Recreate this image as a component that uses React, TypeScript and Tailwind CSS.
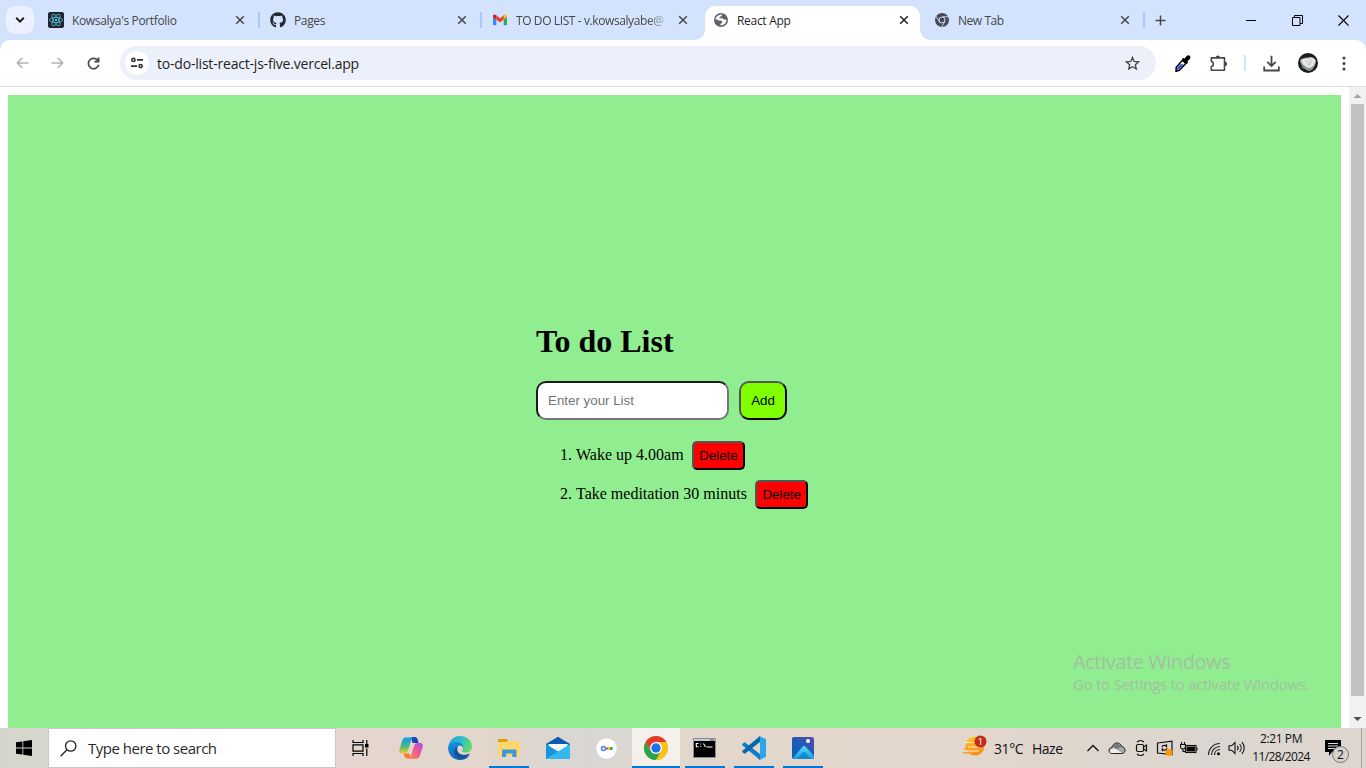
import React from "react";
import { FaGithub } from "react-icons/fa";

const Close = ({ dark = false }: { dark?: boolean }) => (
  <svg width="10" height="10" viewBox="0 0 10 10" className="shrink-0" stroke={dark ? "#1f1f1f" : "#474747"} strokeWidth="1.5">
    <path d="M1.2 1.2 8.8 8.8M8.8 1.2 1.2 8.8" />
  </svg>
);

const ReactIcon = () => (
  <svg width="16" height="16" viewBox="0 0 16 16">
    <rect width="16" height="16" rx="2" fill="#20232a" />
    <g fill="none" stroke="#58c4dc" strokeWidth=".8">
      <ellipse cx="8" cy="8" rx="6.6" ry="2.6" />
      <ellipse cx="8" cy="8" rx="6.6" ry="2.6" transform="rotate(60 8 8)" />
      <ellipse cx="8" cy="8" rx="6.6" ry="2.6" transform="rotate(120 8 8)" />
    </g>
    <circle cx="8" cy="8" r="1.3" fill="#58c4dc" />
  </svg>
);

const Gmail = () => (
  <svg width="16" height="16" viewBox="0 0 16 16">
    <path d="M1 5v7.4c0 .5.4.8.9.8h2.4V7.1z" fill="#4285f4" />
    <path d="M11.7 7.1v6.1h2.4c.5 0 .9-.3.9-.8V5z" fill="#34a853" />
    <path d="M11.7 3.6v4L15 5.2V4.1c0-1.4-1.500-2-2.500-1.200z" fill="#fbbc04" />
    <path d="M4.300 7.600V3.300L8 6.200l3.700-2.900v4.300L8 10.400z" fill="#ea4335" />
    <path d="M1 4.100v1.100l3.300 2.400v-4l-.8-.7C2.500 2.100 1 2.700 1 4.100z" fill="#c5221f" />
  </svg>
);

const Globe = () => (
  <svg width="14" height="14" viewBox="0 0 14 14">
    <circle cx="7" cy="7" r="7" fill="#5f6368" />
    <path d="M8.200 1.500 7.600 3.200 5.700 3.700 5.300 5.300h3.300l1.300 1.300 2.600.2c-.1 2.200-1.500 4.400-3.800 5.300L6.400 12.500l.2-1.700 1.700-1V8.400L6.900 7.500H4.600L3 6.300l-1.500.4C1.500 4.200 3.900 1.500 8.200 1.500z" fill="#fff" />
    <path d="M9 2.100 8.600 3.900l1.600 1.500 2-.3C11.700 3.600 10.500 2.500 9 2.100zM1.500 7.300l1.900 1.500 1 3.100C2.600 11 1.600 9.300 1.500 7.300z" fill="#5f6368" />
  </svg>
);

const Chrome = ({ gray = false, size = 24 }: { gray?: boolean; size?: number }) => (
  <svg width={size} height={size} viewBox="0 0 48 48">
    <circle cx="24" cy="24" r="24" fill={gray ? "#474b50" : "#fbc116"} />
    {!gray && (
      <>
        <path d="M3.200 12A24 24 0 0 1 44.800 12H24L14 30z" fill="#e33b2e" />
        <path d="M3.200 12A24 24 0 0 0 24 48l10.400-18H13.600z" fill="#2ba24c" />
        <path d="M44.800 12A24 24 0 0 1 24 48l10.400-18L24 12z" fill="#fbc116" />
      </>
    )}
    {gray && (
      <path d="M24 13h22M14.500 29.500 3.500 10.500M33.500 29.500 22.500 48.500" stroke="#d3e3fd" strokeWidth="3" />
    )}
    <circle cx="24" cy="24" r={gray ? 11.500 : 12} fill={gray ? "#d3e3fd" : "#fff"} />
    <circle cx="24" cy="24" r={gray ? 8.500 : 9.400} fill={gray ? "#474b50" : "#1a73e8"} />
  </svg>
);

type TabProps = {
  icon: React.ReactNode;
  title: string;
  box: string;
  text: string;
  close: string;
  sep?: boolean;
};

const Tab = ({ icon, title, box, text, close, sep = true }: TabProps) => (
  <div className={"flex h-10 shrink-0 items-center " + box}>
    <span className="flex w-4 shrink-0 justify-center">{icon}</span>
    <span className={"whitespace-nowrap pt-[2px] text-[12px] leading-4 text-[#474747] " + text}>{title}</span>
    <span className={"ml-auto flex " + close}>
      <Close />
    </span>
    <span className={sep ? "h-4 w-[2px] bg-[#a8c7fa]" : "h-4 w-[2px]"} />
  </div>
);

const TabStrip = () => (
  <div className="flex h-10 shrink-0 bg-[#d3e3fd]">
    <div className="ml-[6px] mr-1 mt-[6px] flex h-7 w-7 shrink-0 items-center justify-center rounded-[9px] bg-[#ebf1fe]">
      <svg width="10" height="6" viewBox="0 0 10 6" fill="none" stroke="#1f1f1f" strokeWidth="2">
        <path d="m1.200.8 3.800 3.800L8.800.8" />
      </svg>
    </div>
    <Tab icon={<ReactIcon />} title="Kowsalya's Portfolio" box="w-[222px] pl-[10px]" text="ml-2 tracking-[-0.35px]" close="mr-[13px]" />
    <Tab icon={<FaGithub size={16} color="#24292f" />} title="Pages" box="w-[222px] pl-[10px]" text="ml-2 tracking-[-0.35px]" close="mr-[13px]" />
    <Tab
      icon={<Gmail />}
      title="TO DO LIST - v.kowsalyabe@"
      box="w-[221px] pl-[10px]"
      text="ml-2 tracking-[-0.4px] [mask-image:linear-gradient(to_right,black_132px,transparent_154px)]"
      close="mr-[13px]"
      sep={false}
    />
    <div className="w-[222px] shrink-0 pl-[2px] pt-[6px]">
      <div className="relative flex h-[34px] w-[215px] items-center rounded-t-[10px] bg-white pb-[6px] pl-[9px]">
        <span className="absolute -left-[10px] bottom-0 h-[10px] w-[10px] bg-[radial-gradient(circle_at_0_0,transparent_9.500px,white_10px)]" />
        <span className="absolute -right-[10px] bottom-0 h-[10px] w-[10px] bg-[radial-gradient(circle_at_100%_0,transparent_9.500px,white_10px)]" />
        <Globe />
        <span className="ml-[9px] pt-[2px] text-[12px] leading-4 tracking-[-0.3px] text-[#1f1f1f]">React App</span>
        <span className="ml-auto mr-[11px]">
          <Close dark />
        </span>
      </div>
    </div>
    <Tab icon={<Chrome gray size={14} />} title="New Tab" box="w-[220px] pl-[9px]" text="ml-2 tracking-[-0.45px]" close="mr-[13px]" />
    <div className="flex flex-1 items-center pl-[10px]">
      <svg width="11" height="11" viewBox="0 0 11 11" stroke="#474747" strokeWidth="1.500">
        <path d="M5.500.5v10M.5 5.500h10" />
      </svg>
      <svg className="ml-20" width="10" height="10" viewBox="0 0 10 10" stroke="#000">
        <path d="M0 5.500h10" />
      </svg>
      <svg className="ml-9" width="11" height="11" viewBox="0 0 11 11" fill="none" stroke="#000">
        <path d="M.5 2.500h7.500v8H.5zM2.500 2.500v-2h8v8h-2.500" />
      </svg>
      <svg className="ml-[35px]" width="11" height="11" viewBox="0 0 11 11" stroke="#000" strokeWidth="1.100">
        <path d="m.5.5 10 10M10.500.5l-10 10" />
      </svg>
    </div>
  </div>
);

const Toolbar = () => (
  <div className="h-[47px] shrink-0 bg-[#d3e3fd]">
    <div className="flex h-full items-center rounded-t-[10px] border-b border-[#dfe1e5] bg-white">
      <svg className="ml-4" width="13" height="12" viewBox="0 0 13 12" fill="none" stroke="#b0b0b0" strokeWidth="1.500">
        <path d="M12.500 6H1.500M6.300 1 1.300 6l5 5" />
      </svg>
      <svg className="ml-[22px]" width="13" height="12" viewBox="0 0 13 12" fill="none" stroke="#b0b0b0" strokeWidth="1.500">
        <path d="M.5 6h11M6.700 1l5 5-5 5" />
      </svg>
      <svg className="ml-[23px]" width="13" height="13" viewBox="0 0 13 13" fill="none" stroke="#474747" strokeWidth="1.700">
        <path d="M11 3.700A5.200 5.200 0 1 0 11.700 7.700M11.600.5v4.200H7.400" />
      </svg>
      <div className="ml-[20px] flex h-[34px] w-[1036px] items-center rounded-full bg-[#ecf0fa] pl-[5px]">
        <div className="flex h-6 w-6 items-center justify-center rounded-full bg-white">
          <svg width="12" height="12" viewBox="0 0 12 12" fill="none" stroke="#303030" strokeWidth="1.600">
            <circle cx="2.400" cy="2.900" r="1.600" />
            <circle cx="9.600" cy="9.100" r="1.600" />
            <path d="M6 2.900h6M0 9.100h6" />
          </svg>
        </div>
        <span className="ml-2 whitespace-nowrap pt-px text-[14px] leading-5 tracking-[-0.2px] text-[#1f1f1f]">to-do-list-react-js-five.vercel.app</span>
        <svg className="ml-auto mr-[16px]" width="15" height="15" viewBox="0 0 15 15" fill="none" stroke="#474747" strokeWidth="1.300">
          <path d="m7.500 1.400 1.700 4 4.400.4-3.300 2.900 1 4.300-3.800-2.300L3.700 13l1-4.300-3.300-2.900 4.400-.4z" />
        </svg>
      </div>
      <svg className="ml-[19px]" width="16" height="17" viewBox="0 0 16 17">
        <path d="m1.200 12.300 6.300-7 3.300 3.200-6.500 6.900-3.300.9z" fill="#fff" stroke="#000" strokeWidth="1.500" />
        <path d="m2.200 13 3.300-3.700h3.300l-4.800 5-2 .6z" fill="#2446c8" />
        <path d="m6.700 4.300 1.500-1.500 1 .9L11.700.9c1-1 2.300-1 3.200 0 .8.900.8 2.100-.1 3L12.300 6.600l.9.900-1.600 1.600z" fill="#000" />
      </svg>
      <svg className="ml-[19px]" width="17" height="17" viewBox="0 0 17 17">
        <path d="M1.300 2.900h13.200v12.300H1.300v-3.600C4 11.500 4 6.700 1.300 6.500z" fill="none" stroke="#474747" strokeWidth="1.600" strokeLinejoin="round" />
        <path d="M5.800 2.500a2.100 2.100 0 0 1 4.200 0zM15 6.800a2.100 2.100 0 0 1 0 4.200z" fill="#474747" />
      </svg>
      <span className="ml-[17px] h-4 w-[2px] bg-[#d3e3fd]" />
      <svg className="ml-[17px]" width="17" height="17" viewBox="0 0 17 17" fill="none" stroke="#474747" strokeWidth="1.800">
        <path d="M8.500.8v9.700M4.300 6.800l4.200 4.200 4.200-4.200M1.200 11.500v4h14.600v-4" />
      </svg>
      <svg className="ml-[18px]" width="20" height="20" viewBox="0 0 20 20">
        <circle cx="10" cy="10" r="10" fill="#171d1b" />
        <path d="M2 7c2-2 5-2.500 8-2.500 3-1 6 0 8 3-.2 5-2.500 9-6 10.500C7 18 2 12 2 7z" fill="#8f9590" />
        <path d="M3 7c3-2 6-1 9-2.500 3-.5 5 1 5.500 3.500C17 12 14 15 11 15 7 14 4 11 3 7z" fill="#e6e3e3" />
        <path d="M8 8c2 .5 3 2 3 4.500M12 6c1 2 1 4-.5 6" stroke="#b6b4b2" strokeWidth=".8" fill="none" />
        <path d="M3 14l3 2" stroke="#58634f" fill="none" />
      </svg>
      <svg className="ml-[24px]" width="4" height="15" viewBox="0 0 4 15" fill="#474747">
        <circle cx="2" cy="2" r="1.600" />
        <circle cx="2" cy="7.500" r="1.600" />
        <circle cx="2" cy="13" r="1.600" />
      </svg>
    </div>
  </div>
);

const DeleteButton = () => (
  <button className="h-[29px] w-[52.500px] rounded-[5px] border-2 border-b-black border-l-[#555] border-r-black border-t-[#555] bg-[#ff0000] text-center font-['Liberation_Sans',Arial,sans-serif] text-[13.333px] leading-[15px] text-black">
    Delete
  </button>
);

const Item = ({ marker, children }: { marker: string; children: React.ReactNode }) => (
  <li className="flex h-[29px] items-center pl-6">
    <span className="w-4 pb-[2px]">{marker}</span>
    <span className="mr-[8.600px] pb-[2px]">{children}</span>
    <DeleteButton />
  </li>
);

const Page = () => (
  <div className="flex min-h-0 flex-1 bg-white">
    <main className="ml-2 mt-2 w-[1333px] bg-[#90ee90] pl-[528px] pt-[228px] font-['Liberation_Serif','Times_New_Roman',serif] text-black">
      <h1 className="text-[32px] font-bold leading-[36px]">To do List</h1>
      <div className="mt-[22px] flex gap-[10px]">
        <input
          placeholder="Enter your List"
          className="h-[39px] w-[193px] rounded-[10px] border-2 border-b-[#767676] border-l-[#1c1c1c] border-r-[#767676] border-t-[#1c1c1c] bg-white px-[10px] font-['Liberation_Sans',Arial,sans-serif] text-[13.333px] placeholder:text-[#757575]"
        />
        <button className="h-[39px] w-12 rounded-[10px] border-2 border-b-black border-l-[#555] border-r-black border-t-[#555] bg-[#7fff00] font-['Liberation_Sans',Arial,sans-serif] text-[13.333px]">
          Add
        </button>
      </div>
      <ol className="mt-[21px] flex list-none flex-col gap-[10px] text-[16px] leading-[27px]">
        <Item marker="1.">Wake up 4.00am</Item>
        <Item marker="2.">Take meditation 30 minuts</Item>
      </ol>
    </main>
    <div className="ml-2 flex w-[17px] flex-col items-center bg-[#f1f1f1]">
      <svg width="17" height="17" viewBox="0 0 17 17">
        <path d="M4.500 11h8l-4-4z" fill="#a3a3a3" />
      </svg>
      <div className="h-[592px] w-[13px] bg-[#c1c1c1]" />
      <svg className="mt-[14px]" width="17" height="17" viewBox="0 0 17 17">
        <path d="M4.500 7h8l-4 4z" fill="#505050" />
      </svg>
    </div>
  </div>
);

const AppCell = ({ children, open = false, active = false }: { children: React.ReactNode; open?: boolean; active?: boolean }) => (
  <div className={"flex h-10 w-12 shrink-0 flex-col items-center " + (active ? "bg-[#f4f0ec]" : "")}>
    <div className="flex h-[38px] items-center pt-[2px]">{children}</div>
    {open && <div className={"h-[2px] bg-[#0078d7] " + (active ? "w-12" : "w-10")} />}
  </div>
);

const Copilot = () => (
  <svg width="24" height="24" viewBox="0 0 24 24">
    <defs>
      <linearGradient id="cpA" x1="0" y1="0" x2="0" y2="1">
        <stop offset="0" stopColor="#1598ed" />
        <stop offset=".5" stopColor="#3cb887" />
        <stop offset="1" stopColor="#f5c82c" />
      </linearGradient>
      <linearGradient id="cpB" x1="1" y1="0" x2="0" y2="1">
        <stop offset="0" stopColor="#a551ea" />
        <stop offset=".5" stopColor="#ee5b90" />
        <stop offset="1" stopColor="#ff8c42" />
      </linearGradient>
    </defs>
    <path d="M12 1h4c1.500 0 2.200 1 2.700 2.500L19.600 7h-6z" fill="#1647ba" />
    <path d="M6.800 1.500h7.500c-1.500 1-2 2.600-2.500 4.200L9 14.500c-.6 2-1.700 3-3.600 3H3.300c-2.500 0-3.600-1.700-2.900-4L3.300 4.200C3.900 2.500 5 1.500 6.800 1.500z" fill="url(#cpA)" />
    <path d="M4.500 17.500h6L12 22.500H8.300c-1.500 0-2.300-1-2.700-2.500z" fill="#f07c3e" />
    <path d="M18.500 7h2.300c2.500 0 3.600 1.700 2.900 4L20.800 20c-.6 1.600-1.700 2.700-3.600 2.700H9.800c1.500-1 2-2.600 2.500-4.200L15 10c.6-2 1.600-3 3.500-3z" fill="url(#cpB)" />
  </svg>
);

const Edge = () => (
  <svg width="24" height="24" viewBox="0 0 24 24">
    <defs>
      <linearGradient id="edA" x1="0" y1=".2" x2="1" y2=".5">
        <stop offset="0" stopColor="#1c9fe0" />
        <stop offset=".55" stopColor="#2ec2c9" />
        <stop offset="1" stopColor="#66da61" />
      </linearGradient>
      <linearGradient id="edB" x1="0" y1="0" x2=".5" y2="1">
        <stop offset="0" stopColor="#1793dd" />
        <stop offset="1" stopColor="#0c62b6" />
      </linearGradient>
    </defs>
    <path d="M.2 11C1 4.500 6 0 12 0c7 0 12 5 12 10.500 0 4-3 6-6 6-3.500 0-4.200-1.200-3.700-2.200 1.500-2 .3-5.800-4.800-5.800C5 8 1.500 9 .2 11z" fill="url(#edA)" />
    <path d="M.2 11C1.500 7.500 5 6 8.800 6c4 0 6.500 3 6.400 6-.3-2-2.500-3-4.700-2.200-3.500 1.500-4.500 8 1.500 10.700 3 1.500 6.500 1 10-1.500C20 22 16 24 12 24 5 24-.5 18 .2 11z" fill="url(#edB)" />
    <path d="M10.500 9.800C6.500 11 4.300 17 8.500 20.800c3.500 3 9.500 2.200 13.200-2.500.3-.5 0-.8-.5-.5-6 2.700-12-.2-12-4.300 0-1.600.5-2.800 1.300-3.700z" fill="#12549b" />
  </svg>
);

const Explorer = () => (
  <svg width="22" height="20" viewBox="0 0 22 20">
    <path d="M0 2c0-.7.4-1 1-1h7.500l1.500 2h11.200c.5 0 .8.300.8.800V17c0 .6-.3 1-1 1H1c-.7 0-1-.3-1-1z" fill="#ffd76d" />
    <path d="M0 2c0-.7.4-1 1-1h7.500l1.500 1-1.500 2H0z" fill="#dfa005" />
    <path d="M4 19v-6.500c0-.6.400-1 1-1h12.500c.6 0 1 .4 1 1V19h-4.200v-3.500H8.200V19z" fill="#3a99dc" />
  </svg>
);

const Mail = () => (
  <svg width="24" height="24" viewBox="0 0 24 24">
    <path d="M0 8 12 .8 24 8v3H0z" fill="#0a5aae" />
    <path d="M2.500 8h19v8h-19z" fill="#fff" />
    <path d="M0 8v15h24L12 15.500z" fill="#1593dc" />
    <path d="M24 8v15H0z" fill="#32b9ee" />
    <path d="M2.300 8h19.400L12 15z" fill="#f4f5f6" />
  </svg>
);

const Terminal = () => (
  <svg className="mr-px" width="23" height="20" viewBox="0 0 23 20">
    <rect x=".5" y=".5" width="22" height="19" fill="#000" stroke="#8a8f95" />
    <path d="M1 1h21v2H1z" fill="#c3cbd5" />
    <path d="M17 2h4" stroke="#47505c" />
    <path d="M5.500 5.500H3.300v3.200h2.200M10.500 5.500l2 3.500" fill="none" stroke="#fff" strokeWidth="1.100" />
    <path d="M7.300 5.600h1v1h-1zM7.300 8h1v1h-1zM13.500 8.500h6v1h-6z" fill="#fff" />
  </svg>
);

const VSCode = () => (
  <svg width="24" height="24" viewBox="0 0 24 24">
    <path d="m.4 8 1.600-1.400c.4-.3.800-.3 1.200 0L18 18v6L.4 9.200c-.4-.4-.4-.8 0-1.200z" fill="#0f7dc7" />
    <path d="M.4 16 2 17.400c.4.3.8.3 1.200 0L18 6V0L.4 14.800c-.4.4-.4.800 0 1.200z" fill="#0669ad" />
    <path d="M17.300 24c-.6 0-1-.2-1.500-.7.800.7 2.200.2 2.200-1V1.700c0-1.200-1.400-1.700-2.200-1 .5-.5 1.200-.8 2-.4l5 2.300c.8.400 1.200.8 1.200 1.800v15.200c0 1-.4 1.400-1.200 1.800l-4.500 2.300z" fill="#2ba6ed" />
  </svg>
);

const Photos = () => (
  <svg width="22" height="22" viewBox="0 0 22 22">
    <defs>
      <linearGradient id="phA" x1="0" y1="1" x2="1" y2="0">
        <stop offset="0" stopColor="#0b5fbd" />
        <stop offset=".5" stopColor="#1b5bb8" />
        <stop offset="1" stopColor="#5d4bab" />
      </linearGradient>
      <linearGradient id="phB" x1="0" y1="0" x2="0" y2="1">
        <stop offset="0" stopColor="#55dcf8" />
        <stop offset="1" stopColor="#159ce2" />
      </linearGradient>
    </defs>
    <rect width="22" height="22" rx="2" fill="url(#phA)" />
    <path d="m1 21 9.800-11.500c.8-1 1.800-1 2.600 0L22 19v1.500c0 1-.6 1.500-1.500 1.500H2z" fill="url(#phB)" />
    <path d="m5 22 6-6.500c.7-.7 1.500-.7 2.200 0L19 22z" fill="#1288cf" />
    <circle cx="16" cy="4" r="2" fill="#fff" />
  </svg>
);

const Tray = () => (
  <>
    <svg className="ml-[136px] mt-[-5px] shrink-0" width="24" height="22" viewBox="0 0 24 22">
      <defs>
        <linearGradient id="hz" x1="0" y1="0" x2="0" y2="1">
          <stop offset="0" stopColor="#ffc928" />
          <stop offset="1" stopColor="#f28a1c" />
        </linearGradient>
      </defs>
      <circle cx="12" cy="11" r="9.500" fill="url(#hz)" />
      <path d="M2 7.500h9M5 12h12M3 16h13" stroke="#fff0c0" strokeWidth="1.200" />
      <path d="M0 17.800h11M1 14h11" stroke="#f6a32a" strokeWidth="1.400" />
      <circle cx="17.500" cy="6.500" r="6" fill="#c42b1c" />
      <text x="17.500" y="10" fill="#fff" fontSize="9.500" textAnchor="middle" fontFamily="Open Sans, sans-serif">1</text>
    </svg>
    <span className="ml-[7px] w-[38px] shrink-0 whitespace-nowrap text-[14px] tracking-[-0.4px]">31°C</span>
    <span className="w-[54px] shrink-0 text-[14px] tracking-[-0.5px]">Haze</span>
    <svg className="shrink-0" width="14" height="8" viewBox="0 0 14 8" fill="none" stroke="#111" strokeWidth="1.300">
      <path d="m1.500 7 5.500-5.500L12.500 7" />
    </svg>
    <svg className="ml-2 shrink-0" width="18" height="13" viewBox="0 0 18 13">
      <path d="M4.500 11.500C2.200 11.500 1 10.200 1 8.400c0-1.700 1.200-2.900 3-3C4.800 2.800 6.500 1 9 1c2.300 0 4 1.400 4.600 3.600 2 .1 3.400 1.600 3.400 3.500 0 2-1.300 3.400-3.300 3.400z" fill="#aaa" stroke="#222" />
      <path d="M2 9.500c0-2 3-4 5.500-2.500L14 11H4.500C3 11 2 10.500 2 9.500z" fill="#eee" />
      <path d="M5 5C6 1.500 11 .5 13 5L9.500 7z" fill="#777" />
    </svg>
    <svg className="ml-[9px] shrink-0" width="13" height="18" viewBox="0 0 13 18" fill="none" stroke="#111" strokeWidth="1.200">
      <path d="M2 3c2-2 5-2 7 0M2 15c2 2 5 2 7 0M8.500 8l3-2v6l-3-2" />
      <rect x="1.500" y="5.500" width="7" height="7" rx="1.500" />
    </svg>
    <svg className="ml-2 shrink-0" width="18" height="16" viewBox="0 0 18 16" fill="none" stroke="#111" strokeWidth="1.200">
      <path d="M1.500 3 16 1.200v13.300L1.500 13z" />
      <path d="M6 7c.8-2 3.500-2 4.500-.5V4.300M11 8.500c-1 2-3.500 2.200-4.700.6v2.200" />
      <circle cx="13" cy="12.500" r="3.500" fill="#ff9800" stroke="none" />
    </svg>
    <svg className="ml-[6px] shrink-0" width="18" height="14" viewBox="0 0 18 14" fill="none" stroke="#111" strokeWidth="1.100">
      <path d="M1.500 1v3M4.500 1v3M.5 3.500h5v2c0 2-1 2.500-2.500 2.500S.5 7.500.5 5.500zM3 8v2.500h2" fill="none" />
      <rect x="5.500" y="4.500" width="10.500" height="7" />
      <path d="M7 6h7.500v4H7z" fill="#000" />
      <path d="M17 6.500v3" />
    </svg>
    <svg className="ml-[9px] mt-[2px] shrink-0" width="15" height="14" viewBox="0 0 15 14" fill="none" stroke="#222" strokeWidth="1.200">
      <path d="M1.500 13C1.500 6.500 6.500 1.500 13 1.500M4.500 13C4.500 8.200 8.200 4.500 13 4.500M7.500 13c0-3.200 2.300-5.500 5.500-5.500" />
      <circle cx="11.500" cy="11.800" r="1.500" fill="#000" stroke="none" />
    </svg>
    <svg className="ml-[6px] shrink-0" width="18" height="14" viewBox="0 0 18 14" fill="none" stroke="#111" strokeWidth="1.100">
      <path d="M1 4.800h2.500L7 1.500v11L3.500 9.200H1zM9.300 4.800c1 1.300 1 3.100 0 4.400M11.600 3c2 2.300 2 5.700 0 8M14 1.200c2.900 3.400 2.900 8.200 0 11.600" />
    </svg>
    <div className="ml-[3px] flex h-10 w-[64px] shrink-0 flex-col items-center justify-center whitespace-nowrap text-[12px] leading-[18px]">
      <span className="tracking-[-0.4px]">2:21 PM</span>
      <span className="tracking-[-0.6px]">11/28/2024</span>
    </div>
    <div className="relative ml-3 h-10 w-[18px] shrink-0">
      <svg className="mt-[11px]" width="17" height="18" viewBox="0 0 17 18">
        <path d="M0 1h16v12H7l-3 4v-4H0z" fill="#000" />
        <path d="M3 4.500h10M3 7h10M3 9.500h7" stroke="#ddd" strokeWidth="1.100" />
      </svg>
      <span className="absolute left-[7px] top-[18px] flex h-[17px] w-[17px] items-center justify-center rounded-full border border-[#777] bg-[#d5d1cd] text-[12px] leading-none">2</span>
    </div>
    <span className="ml-auto mr-1 h-10 w-px bg-[#aaa5a0]" />
  </>
);

const Taskbar = () => (
  <footer className="flex h-10 shrink-0 items-center bg-[linear-gradient(90deg,#d4d6cc_0%,#d8d6ce_4%,#e4d5cf_26%,#e2d6cb_36%,#d8d6d4_43%,#e3d7cb_52%,#e2d6cd_72%,#dbd6cf_88%,#dcd6ce_100%)] text-[#111]">
    <div className="flex w-12 shrink-0 justify-center">
      <svg width="16" height="16" viewBox="0 0 16 16">
        <path d="M0 2.300 6.500 1.400v6.200H0zM7.300 1.300 16 0v7.600H7.300zM0 8.400h6.500v6.200L0 13.700zM7.300 8.400H16V16l-8.700-1.300z" />
      </svg>
    </div>
    <div className="flex h-10 w-[288px] shrink-0 items-center border border-[#c8c8c8] bg-white pl-[11px]">
      <svg width="17" height="17" viewBox="0 0 17 17" fill="none" stroke="#222" strokeWidth="1.300">
        <circle cx="10.700" cy="6" r="5.200" />
        <path d="M7 9.700.6 16.300" />
      </svg>
      <span className="ml-[11px] whitespace-nowrap text-[15px] tracking-[-0.5px] text-[#2b2b2b]">Type here to search</span>
    </div>
    <div className="mr-[3px] flex w-12 shrink-0 justify-center">
      <svg width="17" height="16" viewBox="0 0 17 16" fill="none" stroke="#000" strokeWidth="1.200">
        <path d="M1 0v2.500h10V0M1 16v-2.500h10V16M1 4.800h10v6.400H1zM14.800 0v4M14.800 8.500V16" />
        <path d="M13 4h3.500v3.500H13z" fill="#000" stroke="none" />
      </svg>
    </div>
    <div className="flex shrink-0 gap-px">
      <AppCell><Copilot /></AppCell>
      <AppCell><Edge /></AppCell>
      <AppCell open><Explorer /></AppCell>
      <AppCell><Mail /></AppCell>
      <AppCell>
        <svg className="mr-px" width="21" height="21" viewBox="0 0 21 21">
          <circle cx="10.500" cy="10.500" r="10.200" fill="#fff" />
          <path d="M10 10.500h2" stroke="#ea4335" strokeWidth="2" />
          <path d="M12 10.500h2" stroke="#fbbc04" strokeWidth="2.500" />
          <path d="M14 9h2.500v3H14z" fill="#34a853" />
          <circle cx="7.500" cy="10.500" r="2" fill="#fff" stroke="#4285f4" strokeWidth="1.500" />
        </svg>
      </AppCell>
      <AppCell open active><Chrome /></AppCell>
      <AppCell open><Terminal /></AppCell>
      <AppCell open><VSCode /></AppCell>
      <AppCell open><Photos /></AppCell>
    </div>
    <Tray />
  </footer>
);

export default function App() {
  return (
    <div className="relative flex h-[768px] w-[1366px] flex-col overflow-hidden font-['Open_Sans','Noto_Sans',sans-serif]">
      <TabStrip />
      <Toolbar />
      <Page />
      <Taskbar />
      <div className="absolute left-[1073px] top-[648px] whitespace-nowrap text-[#a2bfa2]">
        <div className="text-[20px] leading-7 tracking-[-0.43px]">Activate Windows</div>
        <div className="-mt-px text-[15px] leading-[18px] tracking-[-0.27px]">Go to Settings to activate Windows.</div>
      </div>
    </div>
  );
}
